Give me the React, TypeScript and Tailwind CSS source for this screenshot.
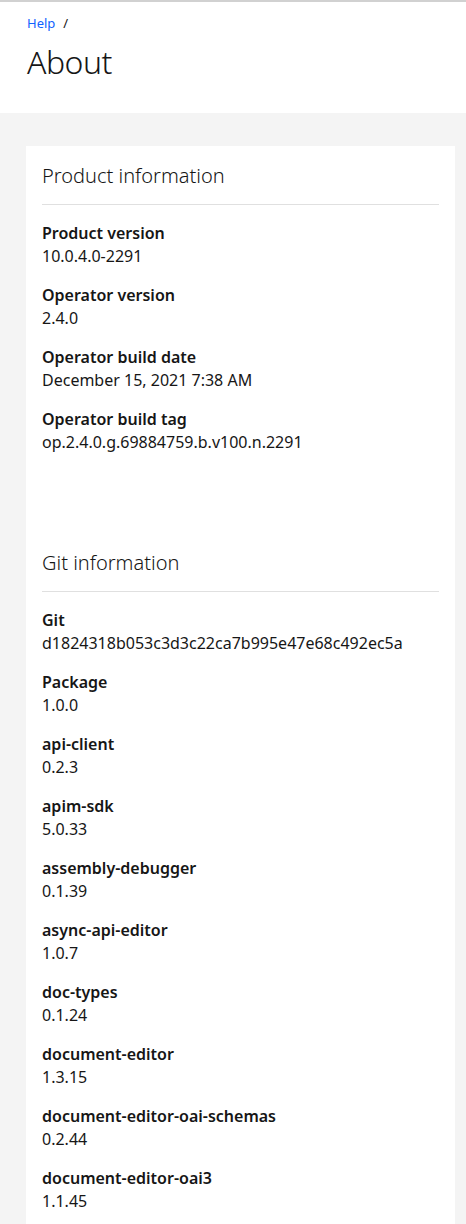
const productInfo = [
  { label: "Product version", value: "10.0.4.0-2291" },
  { label: "Operator version", value: "2.4.0" },
  { label: "Operator build date", value: "December 15, 2021 7:38 AM" },
  { label: "Operator build tag", value: "op.2.4.0.g.69884759.b.v100.n.2291" },
];

const gitInfo = [
  { label: "Git", value: "d1824318b053c3d3c22ca7b995e47e68c492ec5a" },
  { label: "Package", value: "1.0.0" },
  { label: "api-client", value: "0.2.3" },
  { label: "apim-sdk", value: "5.0.33" },
  { label: "assembly-debugger", value: "0.1.39" },
  { label: "async-api-editor", value: "1.0.7" },
  { label: "doc-types", value: "0.1.24" },
  { label: "document-editor", value: "1.3.15" },
  { label: "document-editor-oai-schemas", value: "0.2.44" },
  { label: "document-editor-oai3", value: "1.1.45" },
];

const InfoSection = ({ title, items, className = "" }) => (
  <section className={className}>
    <h2 className="text-[20px] leading-[28px] font-light text-[#161616]">{title}</h2>
    <div className="mt-[14px] border-t border-[#e0e0e0]" />
    <dl className="mt-[17px]">
      {items.map((item) => (
        <div key={item.label} className="mb-4">
          <dt className="text-[16px] leading-[22px] font-semibold text-[#161616]">{item.label}</dt>
          <dd className="text-[16px] leading-[24px] text-[#161616]">{item.value}</dd>
        </div>
      ))}
    </dl>
  </section>
);

export default function App() {
  return (
    <div className="min-h-screen bg-[#f4f4f4] font-['Noto_Sans',sans-serif] text-[#161616]">
      {/* Page header */}
      <header className="bg-white border-t-2 border-[#d1d1d1] px-[27px] pt-[12px] pb-[31px]">
        <nav className="flex items-center gap-2 text-[13px] leading-[18px]">
          <a href="#" className="text-[#0f62fe]">Help</a>
          <span>/</span>
        </nav>
        <h1 className="mt-[10px] text-[32px] leading-[40px] font-light tracking-[-0.5px]">About</h1>
      </header>

      {/* Content */}
      <main className="pt-[33px] pl-[26px] pr-[11px]">
        <div className="bg-white px-4 pt-4 pb-8">
          <InfoSection title="Product information" items={productInfo} className="mb-[95px]" />
          <InfoSection title="Git information" items={gitInfo} />
        </div>
      </main>
    </div>
  );
}
